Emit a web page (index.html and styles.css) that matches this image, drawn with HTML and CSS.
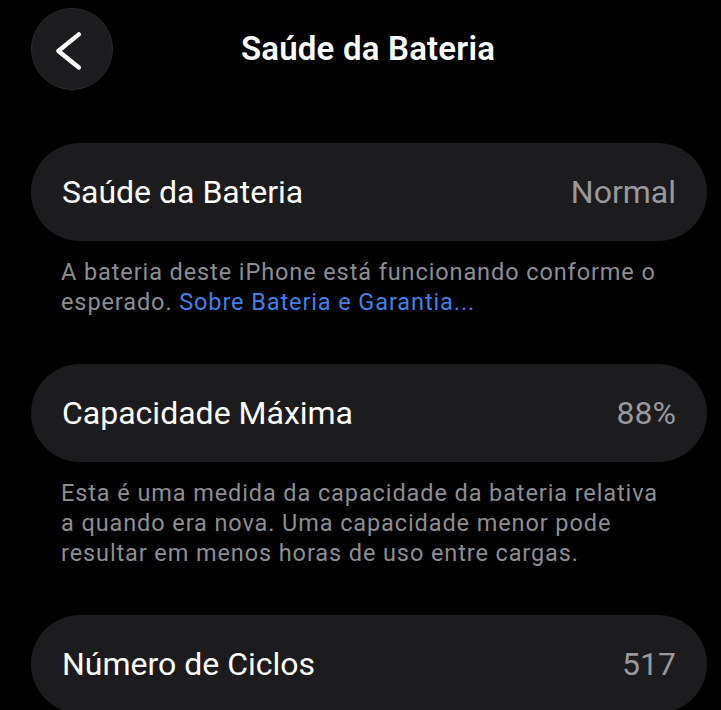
FILE: index.html
```html
<!DOCTYPE html>
<html lang="pt-BR">
<head>
<meta charset="utf-8">
<title>Saúde da Bateria</title>
<link rel="stylesheet" href="styles.css">
</head>
<body>
<div class="screen">
  <header class="nav">
    <button class="back" aria-label="Voltar">
      <svg viewBox="0 0 82 82" width="82" height="82" aria-hidden="true">
        <polyline points="48,26 27,43 48,60" fill="none" stroke="#fff" stroke-width="4.5" stroke-linecap="round" stroke-linejoin="round"/>
      </svg>
    </button>
    <h1 class="title">Saúde da Bateria</h1>
  </header>

  <section class="group first">
    <div class="row">
      <span class="label">Saúde da Bateria</span>
      <span class="value">Normal</span>
    </div>
    <p class="note">A bateria deste iPhone está funcionando conforme o esperado. <a class="link" href="#">Sobre Bateria e Garantia...</a></p>
  </section>

  <section class="group">
    <div class="row">
      <span class="label">Capacidade Máxima</span>
      <span class="value">88%</span>
    </div>
    <p class="note">Esta é uma medida da capacidade da bateria relativa a quando era nova. Uma capacidade menor pode resultar em menos horas de uso entre cargas.</p>
  </section>

  <section class="group">
    <div class="row">
      <span class="label">Número de Ciclos</span>
      <span class="value">517</span>
    </div>
  </section>
</div>
</body>
</html>
```

FILE: styles.css
```css
html, body {
  margin: 0;
  padding: 0;
  background: #000;
}

body {
  font-family: Roboto, "Noto Sans", "Liberation Sans", sans-serif;
  color: #fff;
  -webkit-font-smoothing: antialiased;
}

.screen {
  width: 721px;
  height: 710px;
  overflow: hidden;
  background: #000;
}

.nav {
  display: flex;
  align-items: center;
  padding: 7px 98px 0 31px;
  height: 83px;
}

.back {
  width: 82px;
  height: 82px;
  flex: 0 0 82px;
  padding: 0;
  margin: 0;
  border-radius: 50%;
  background: #1c1c1e;
  border: 1px solid #2a2a2c;
  box-sizing: border-box;
  display: flex;
  align-items: center;
  justify-content: center;
}

.back svg {
  display: block;
}

.title {
  flex: 1;
  margin: 0;
  text-align: center;
  font-size: 33px;
  font-weight: 600;
  letter-spacing: 0.2px;
  color: #fff;
}

.group {
  margin: 47px 14px 0 31px;
}

.group.first {
  margin-top: 53px;
}

.row {
  height: 98px;
  border-radius: 49px;
  background: #1c1c1e;
  display: flex;
  align-items: center;
  justify-content: space-between;
  padding: 0 31px;
  box-sizing: border-box;
}

.label {
  font-size: 32px;
  color: #fff;
}

.value {
  font-size: 32px;
  color: #98989d;
}

.note {
  margin: 16px 0 0 0;
  padding: 0 30px;
  font-size: 23.5px;
  line-height: 30px;
  letter-spacing: 0.9px;
  color: #8d8d92;
}

.link {
  color: #3d82ea;
  text-decoration: none;
}
```
